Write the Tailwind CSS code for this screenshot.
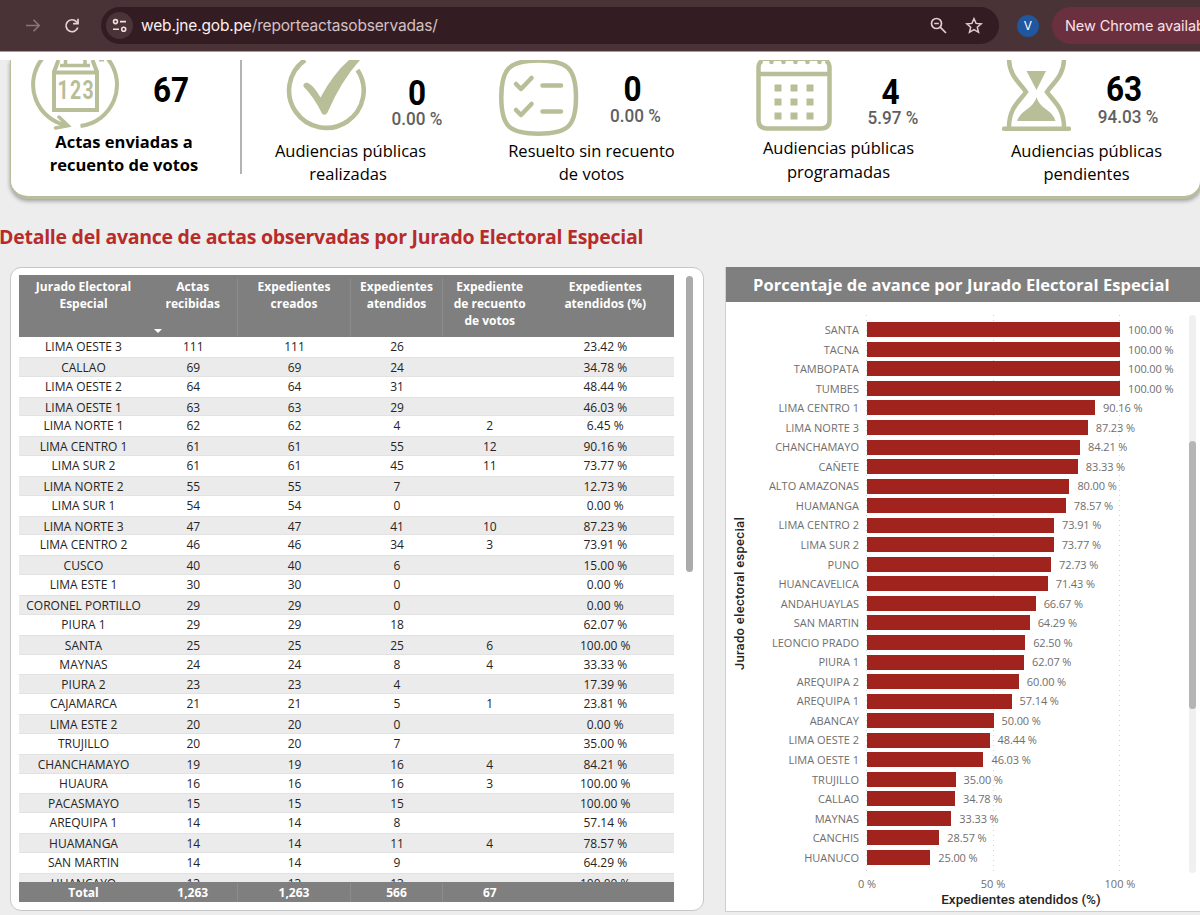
<!DOCTYPE html>
<html lang="es">
<head>
<meta charset="utf-8">
<title>Reporte de actas observadas</title>
<script src="https://cdn.jsdelivr.net/npm/@tailwindcss/browser@4"></script>
</head>
<body class="w-[1200px] h-[915px] overflow-hidden bg-[#ededed] font-['Open_Sans','Noto_Sans',sans-serif] text-black">

<!-- Browser toolbar -->
<header class="h-[52px] bg-[#4a3336] border-b border-[#a8999b] flex items-center font-['Inter','Roboto',sans-serif] whitespace-nowrap">
  <svg class="ml-[24px] size-[18px] shrink-0" viewBox="0 0 18 18" fill="none" stroke="#8d7679" stroke-width="1.6"><path d="M2 8.500h13M9.500 2.700l5.700 5.800-5.700 5.800"/></svg>
  <svg class="ml-[21px] size-[18px] shrink-0" viewBox="0 0 18 18" fill="none" stroke="#e9d3d6" stroke-width="1.700"><path d="M14.800 10.500A6 6 0 1 1 13.500 4.700L14.800 6"/><path d="M15 1.800v4.900h-4.900"/></svg>
  <div class="ml-[20px] w-[898px] h-[37px] rounded-full bg-[#331d22] flex items-center pl-[5px] shrink-0">
    <div class="size-[27px] rounded-full bg-[#4a3438] flex items-center justify-center">
      <svg class="size-[15px]" viewBox="0 0 15 15" fill="none" stroke="#f3dfe2" stroke-width="1.600"><circle cx="3.500" cy="3.600" r="2"/><path d="M8 3.600h6M1 11.200h6"/><circle cx="11.700" cy="11.200" r="2"/></svg>
    </div>
    <div class="ml-[8px] text-[15.500px] leading-[20px] tracking-[-0.170px] text-[#d5c0c4]"><span class="text-[#fbeef0]">web.jne.gob.pe</span>/reporteactasobservadas/</div>
    <svg class="ml-auto size-[18px] shrink-0" viewBox="0 0 18 18" fill="none" stroke="#e3cdd1" stroke-width="1.700"><circle cx="6.500" cy="6.500" r="5"/><path d="M4.200 6.500h4.600M10.200 10.200l5.800 5.800"/></svg>
    <svg class="ml-[17px] mr-[16px] size-[18px] shrink-0" viewBox="0 0 18 18" fill="none" stroke="#e3cdd1" stroke-width="1.500"><path d="M9 1.700l2.100 4.700 5.100.500-3.900 3.400 1.200 5L9 12.700l-4.500 2.600 1.200-5L1.800 6.900l5.100-.500z"/></svg>
  </div>
  <div class="ml-[18px] size-[22px] rounded-full bg-[#20579f] text-white text-[12px] flex items-center justify-center shrink-0">V</div>
  <div class="ml-[13px] w-[200px] h-[37px] rounded-full bg-[#6a3040] text-[#ffe0e6] pl-[13px] pt-[1px] flex items-center text-[14.500px] tracking-[-0.100px] shrink-0">New Chrome available</div>
</header>

<div class="h-[8px] bg-white"></div>

<!-- Summary -->
<section class="h-[150px] overflow-hidden pl-[9.500px]">
  <div class="w-[1192px] h-[139px] bg-white border-l-[1.500px] border-b-[3px] border-r-2 border-[#b9bd9c] rounded-b-[18px] shadow-[0_2px_4px_rgba(0,0,0,0.35)] flex items-start text-[16.500px] leading-[23px] text-center whitespace-nowrap">
    <div class="w-[225px] shrink-0">
      <div class="flex h-[70px] pl-[20px]">
        <svg class="w-[88px] h-[70px] shrink-0" viewBox="31 60 88 70" fill="none" stroke="#b8be98" stroke-width="4">
          <path d="M42 59A41.500 41.500 0 0 0 67 125.500M108 59A41.500 41.500 0 0 1 80.500 126"/>
          <path d="M59 117l9 8.700-12.500 2.300" stroke-width="3.500" stroke-linecap="round"/>
          <path d="M54 72.500h43v37.500H54zM58.500 60L54 72M92.500 60L97 72" />
          <path d="M60 65.500h30M65.500 59v6M85 59v6" stroke-width="3.500"/>
          <path d="M99 60.500h5" stroke-width="2"/>
          <g transform="translate(75.500 99) scale(.78 1)" text-anchor="middle" fill="#b8be98" stroke="none" font-family="Roboto" font-weight="700" font-size="25"><text x="-16">1</text><text x="0">2</text><text x="16">3</text></g>
        </svg>
        <div class="ml-[12px] w-[80px] pt-[13px]"><div class="font-['Roboto',sans-serif] font-bold text-[35px] leading-[36px] scale-x-90">67</div></div>
      </div>
      <div class="font-bold pl-[2px]">Actas enviadas a<br>recuento de votos</div>
    </div>
    <div class="ml-[4px] w-[2px] h-[114px] bg-[#b3b3b3] shrink-0"></div>
    <div class="ml-[1px] w-[216px] shrink-0">
      <div class="flex h-[79px] pl-[43px]">
        <svg class="w-[80px] h-[71px] shrink-0" viewBox="286 60 80 71" fill="none" stroke="#b8be98" stroke-width="4.600">
          <path d="M305 60A37.300 37.300 0 1 0 357.500 70"/>
          <path d="M303.500 84.500C307 80 313 85 320.500 97.500Q333 74 349 60H360Q341 81 327.500 112.500Q325 116.500 322 113.500Q314 97 303.500 86.500z" fill="#b8be98" stroke="none"/>
        </svg>
        <div class="ml-[11px] w-[80px] pt-[16px] font-['Roboto',sans-serif]"><div class="font-bold text-[35px] leading-[36px] scale-x-90">0</div><div class="font-medium text-[19px] leading-[14px] text-[#5f5f5f] scale-x-90">0.00 %</div></div>
      </div>
      <div>Audiencias públicas<br><span class="mr-[5px]">realizadas</span></div>
    </div>
    <div class="ml-[25px] w-[216px] shrink-0">
      <div class="flex h-[79px] pl-[15px]">
        <svg class="w-[80px] h-[76px] shrink-0" viewBox="499 60 80 76" fill="none" stroke="#b8be98" stroke-width="4.500">
          <path d="M538.500 60.500C567 60.500 576 68 576 97.500S567 133.700 538.500 133.700 501.300 127 501.300 97.500 510 60.500 538.500 60.500z"/>
          <path d="M516 84l5 5 10.500-11M516 110l5 5 10.500-11M542.500 85.500H561M542.500 111.500H561" stroke-linecap="round" stroke-linejoin="round"/>
        </svg>
        <div class="ml-[15px] w-[80px] pt-[12px] font-['Roboto',sans-serif]"><div class="font-bold text-[35px] leading-[36px] scale-x-90 mr-[3px]">0</div><div class="mt-[1px] font-medium text-[19px] leading-[14px] text-[#5f5f5f] scale-x-90 ml-[3px]">0.00 %</div></div>
      </div>
      <div>Resuelto sin recuento<br>de votos</div>
    </div>
    <div class="ml-[31px] w-[216px] shrink-0">
      <div class="flex h-[76px] pl-[25px]">
        <svg class="w-[76px] h-[71px] shrink-0" viewBox="756 60 76 71" fill="none" stroke="#b8be98" stroke-width="4.500">
          <path d="M762 60.500Q758.500 63 758.500 68V120Q758.500 128.500 767 128.500H821Q829.500 128.500 829.500 120V68Q829.500 63 826 60.500M758 74h72"/>
          <path d="M762 60h64" stroke-width="2"/>
          <path d="M771.500 59v3M783.500 59v3M795.500 59v3M807.500 59v3M819.500 59v3" stroke-linecap="round"/>
          <path d="M774.500 88h7M790.500 88h7M806.500 88h7M774.500 102h7M790.500 102h7M806.500 102h7M774.500 116h7M790.500 116h7M806.500 116h7" stroke-width="7"/>
        </svg>
        <div class="ml-[20px] w-[80px] pt-[15px] font-['Roboto',sans-serif]"><div class="font-bold text-[35px] leading-[36px] scale-x-90 mr-[3px]">4</div><div class="font-medium text-[19px] leading-[14px] text-[#5f5f5f] scale-x-90 ml-[2px]">5.97 %</div></div>
      </div>
      <div class="leading-[24px]">Audiencias públicas<br>programadas</div>
    </div>
    <div class="ml-[32px] w-[216px] shrink-0">
      <div class="flex h-[79px] pl-[23px]">
        <svg class="w-[69px] h-[71px] shrink-0" viewBox="1002 60 69 71" fill="none" stroke="#b8be98" stroke-width="4.500">
          <path d="M1004 128.700h65" stroke-linecap="round"/>
          <path d="M1009 59C1009 76 1021 84 1026 92C1019 102 1009 108 1009 127M1064 59C1064 76 1052 84 1047 92C1054 102 1064 108 1064 127"/>
          <path d="M1026.500 71H1046L1036.500 90zM1036.500 97Q1038 104 1047 110Q1054 115 1055.500 121H1017Q1019 115 1026 110Q1035 104 1036.500 97z" fill="#b8be98" stroke="none"/>
        </svg>
        <div class="ml-[15px] w-[80px] pt-[12px] font-['Roboto',sans-serif]"><div class="font-bold text-[35px] leading-[36px] scale-x-90 mr-[4px]">63</div><div class="mt-[2px] font-medium text-[19px] leading-[14px] text-[#5f5f5f] scale-x-90 ml-[4px]">94.03 %</div></div>
      </div>
      <div>Audiencias públicas<br>pendientes</div>
    </div>
  </div>
</section>

<h1 class="mt-[12px] h-[30px] leading-[30px] text-[19.500px] font-bold text-[#b72c2b] tracking-[-0.265px] -ml-px whitespace-nowrap">Detalle del avance de actas observadas por Jurado Electoral Especial</h1>

<main class="mt-[15px] flex items-start">
  <!-- Table -->
  <section class="ml-[9.500px] w-[694px] h-[644px] shrink-0 bg-white border border-[#c4c6c8] rounded-[11px] pt-[7px] pl-[8px] flex items-start">
    <div class="w-[655.500px] text-center text-[12px]">
      <div class="grid grid-cols-[130px_89.500px_113px_92px_93.500px_137.500px] h-[62px] bg-[#7f7f7f] text-white font-bold leading-[17px] pt-[3px]">
        <div>Jurado Electoral<br>Especial</div>
        <div class="relative border-r border-[#8c8c8c]">Actas<br>recibidas<i class="absolute left-[5px] bottom-[4px] border-x-[4.500px] border-t-[4.500px] border-x-transparent border-t-white"></i></div>
        <div class="border-r border-[#8c8c8c]">Expedientes<br>creados</div>
        <div class="border-r border-[#8c8c8c]">Expedientes<br>atendidos</div>
        <div>Expediente<br>de recuento<br>de votos</div>
        <div>Expedientes<br>atendidos (%)</div>
      </div>
      <div id="rows" class="h-[545px] overflow-hidden text-[#252423]"></div>
      <div class="grid grid-cols-[130px_89.500px_113px_92px_93.500px_137.500px] h-[20px] bg-[#7f7f7f] text-white font-bold leading-[20px] pt-[1px] *:h-[19px]">
        <div>Total</div><div class="border-r border-[#8c8c8c]">1,263</div><div class="border-r border-[#8c8c8c]">1,263</div><div class="border-r border-[#8c8c8c]">566</div><div>67</div><div></div>
      </div>
    </div>
    <div class="ml-[12px] mt-[1px] w-[7px] h-[296px] rounded-full bg-[#ababab]"></div>
  </section>

  <!-- Chart -->
  <section class="ml-[21.500px] w-[500px] h-[645px] shrink-0 bg-white border border-[#cfcfcf] border-t-0">
    <h2 class="h-[35px] bg-[#7f7f7f] text-white font-bold text-[16.500px] leading-[36px] pl-[27px] tracking-[0.040px] whitespace-nowrap">Porcentaje de avance por Jurado Electoral Especial</h2>
    <div class="flex">
      <div class="w-[27px] h-[584px] flex items-center justify-center">
        <div class="[writing-mode:vertical-rl] rotate-180 font-['Roboto',sans-serif] font-medium text-[13px] tracking-[0.300px] text-[#252423] whitespace-nowrap">Jurado electoral especial</div>
      </div>
      <div class="w-[436px] mt-[13px]">
        <div class="relative h-[558px] pt-[5px]">
          <div class="absolute inset-y-0 left-[113px] w-px bg-[repeating-linear-gradient(to_bottom,#d4d4d4_0_1px,transparent_1px_5px)]"></div>
          <div class="absolute inset-y-0 left-[240px] w-px bg-[repeating-linear-gradient(to_bottom,#d4d4d4_0_1px,transparent_1px_5px)]"></div>
          <div class="absolute inset-y-0 left-[366px] w-px bg-[repeating-linear-gradient(to_bottom,#d4d4d4_0_1px,transparent_1px_5px)]"></div>
          <div id="bars" class="relative text-[11px] leading-[19.560px] text-[#706e6c]"></div>
        </div>
        <div class="flex text-[11px] leading-[15px] mt-[3px] text-[#706e6c] text-center pl-[84px]">
          <div class="w-[60px]">0 %</div><div class="w-[60px] ml-[66px]">50 %</div><div class="w-[60px] ml-[67px]">100 %</div>
        </div>
        <div class="ml-[114px] mt-px w-[308px] text-center font-['Roboto',sans-serif] font-medium text-[13.500px] leading-[14px] text-[#252423]">Expedientes atendidos (%)</div>
      </div>
      <div class="mt-[13px] w-[7px] h-[558px] rounded-full bg-[#f0f0f0] pt-[126px]"><div class="h-[268px] rounded-full bg-[#b5b5b5]"></div></div>
    </div>
  </section>
</main>

<script>
const rows = `LIMA OESTE 3|111|111|26||23.42
CALLAO|69|69|24||34.78
LIMA OESTE 2|64|64|31||48.44
LIMA OESTE 1|63|63|29||46.03
LIMA NORTE 1|62|62|4|2|6.45
LIMA CENTRO 1|61|61|55|12|90.16
LIMA SUR 2|61|61|45|11|73.77
LIMA NORTE 2|55|55|7||12.73
LIMA SUR 1|54|54|0||0.00
LIMA NORTE 3|47|47|41|10|87.23
LIMA CENTRO 2|46|46|34|3|73.91
CUSCO|40|40|6||15.00
LIMA ESTE 1|30|30|0||0.00
CORONEL PORTILLO|29|29|0||0.00
PIURA 1|29|29|18||62.07
SANTA|25|25|25|6|100.00
MAYNAS|24|24|8|4|33.33
PIURA 2|23|23|4||17.39
CAJAMARCA|21|21|5|1|23.81
LIMA ESTE 2|20|20|0||0.00
TRUJILLO|20|20|7||35.00
CHANCHAMAYO|19|19|16|4|84.21
HUAURA|16|16|16|3|100.00
PACASMAYO|15|15|15||100.00
AREQUIPA 1|14|14|8||57.14
HUAMANGA|14|14|11|4|78.57
SAN MARTIN|14|14|9||64.29
HUANCAYO|13|13|13||100.00`.split('\n').map(r => r.split('|'));
document.getElementById('rows').innerHTML = rows.map((r, i) =>
  `<div class="grid grid-cols-[130px_89.500px_113px_92px_93.500px_137.500px] h-[19.850px] ${i % 2 ? 'bg-[#ebebeb] border-y border-[#e2e2e2] leading-[19px]' : 'leading-[20.500px]'}">` +
  r.map((c, k) => `<div>${k === 5 ? c + ' %' : c}</div>`).join('') + '</div>').join('');

const bars = `SANTA 100.00,TACNA 100.00,TAMBOPATA 100.00,TUMBES 100.00,LIMA CENTRO 1 90.16,LIMA NORTE 3 87.23,CHANCHAMAYO 84.21,CAÑETE 83.33,ALTO AMAZONAS 80.00,HUAMANGA 78.57,LIMA CENTRO 2 73.91,LIMA SUR 2 73.77,PUNO 72.73,HUANCAVELICA 71.43,ANDAHUAYLAS 66.67,SAN MARTIN 64.29,LEONCIO PRADO 62.50,PIURA 1 62.07,AREQUIPA 2 60.00,AREQUIPA 1 57.14,ABANCAY 50.00,LIMA OESTE 2 48.44,LIMA OESTE 1 46.03,TRUJILLO 35.00,CALLAO 34.78,MAYNAS 33.33,CANCHIS 28.57,HUANUCO 25.00`.split(',');
document.getElementById('bars').innerHTML = bars.map(b => {
  const n = b.lastIndexOf(' '), v = b.slice(n + 1);
  return `<div class="flex items-center h-[19.560px] whitespace-nowrap"><div class="w-[106px] text-right">${b.slice(0, n)}</div><div class="ml-[8px] h-[15px] bg-[#a0241d]" style="width:${v * 2.53}px"></div><div class="ml-[8px] tracking-[-0.100px]">${v} %</div></div>`;
}).join('');
</script>
</body>
</html>
